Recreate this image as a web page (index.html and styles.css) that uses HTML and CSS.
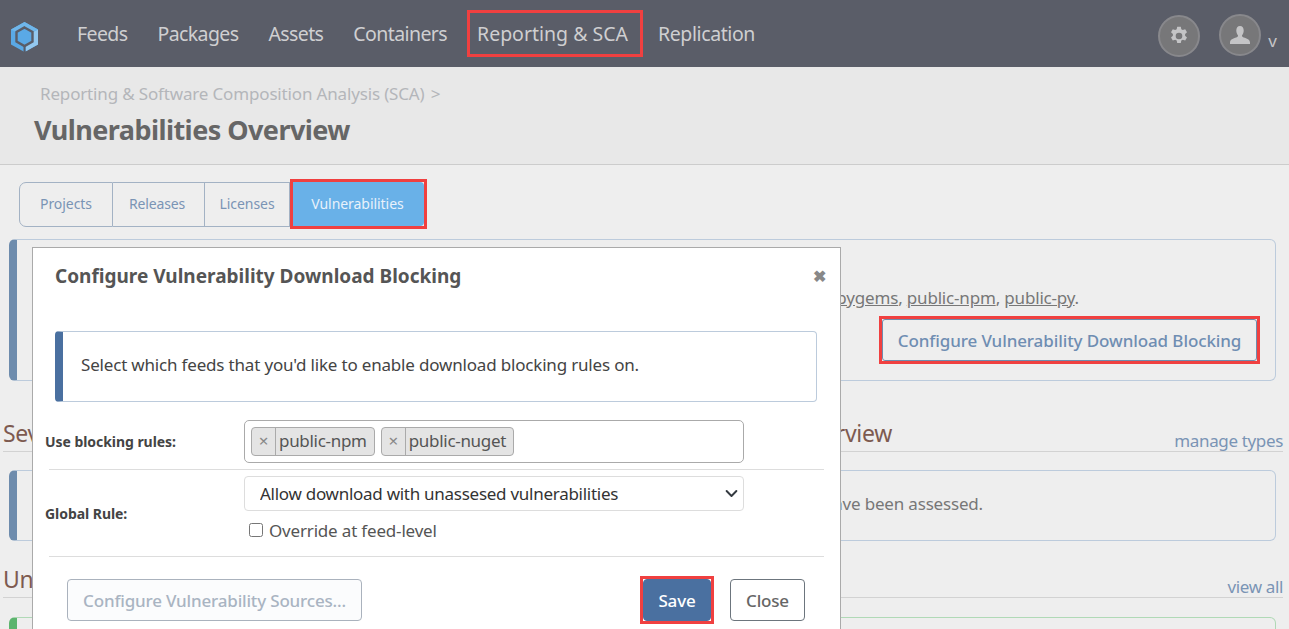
FILE: index.html
```html
<!DOCTYPE html>
<html lang="en">
<head>
  <meta charset="UTF-8">
  <meta name="viewport" content="width=device-width, initial-scale=1.0">
  <title>Vulnerabilities Overview</title>
  <link rel="stylesheet" href="styles.css">
</head>
<body>
  <div class="page">
    <header class="topbar">
      <svg class="logo" width="27" height="30" viewBox="0 0 27 30">
        <path d="M13.500 0 L27 7.500 V22.500 L13.500 30 L0 22.500 V7.500 Z" fill="#5aa9e6"/>
        <path d="M27 7.500 V22.500 L15 29.200 V24 L22 20 V10 Z" fill="#93c8ef"/>
        <path d="M13.500 0 L27 7.500 L22 10 L13.500 5 L5 10 L0 7.500 Z" fill="#6fb6ea"/>
        <path d="M13.500 5.500 L21.500 10 V19.500 L13.500 24 L5.500 19.500 V10 Z" fill="#5aa9e6" stroke="#5a5d68" stroke-width="2.400"/>
        <path d="M13.500 24 V30" stroke="#5a5d68" stroke-width="2"/>
      </svg>
      <nav class="mainnav">
        <a>Feeds</a>
        <a>Packages</a>
        <a>Assets</a>
        <a>Containers</a>
        <a class="marked">Reporting &amp; SCA</a>
        <a class="last">Replication</a>
      </nav>
      <div class="topbar-right">
        <span class="round-btn">
          <svg width="20" height="20" viewBox="0 0 20 20">
            <path fill-rule="evenodd" fill="#c4c4c6" d="M8.200 0.800 h3.600 l0.500 2.500 1.500 0.800 2.400-0.900 1.800 3.100-1.900 1.700 v1.800 l1.900 1.700-1.800 3.100-2.400-0.900-1.500 0.800-0.500 2.500 h-3.600 l-0.500-2.500-1.500-0.800-2.400 0.900-1.800-3.100 1.900-1.700 v-1.800 l-1.900-1.700 1.800-3.100 2.400 0.900 1.500-0.800 Z M10 6.700 a3.300 3.300 0 1 0 0 6.600 a3.300 3.300 0 1 0 0-6.600 Z"/>
          </svg>
        </span>
        <span class="round-btn user">
          <svg width="20" height="18" viewBox="0 0 20 18">
            <path fill="#c4c4c6" d="M10 0 c2.500 0 3.700 2 3.700 4.500 c0 2.200-0.800 3.800-1.700 4.800 c0 1.300 0.400 1.700 1.700 2.200 c3 1 6.300 1.800 6.300 5.100 v1.400 h-20 v-1.400 c0-3.300 3.300-4.100 6.300-5.100 c1.300-0.500 1.700-0.900 1.700-2.200 c-0.900-1-1.700-2.600-1.700-4.800 c0-2.500 1.200-4.500 3.700-4.500 Z"/>
          </svg>
        </span>
        <span class="caret">v</span>
      </div>
    </header>

    <section class="title-band">
      <div class="crumb">Reporting &amp; Software Composition Analysis (SCA) <span class="crumb-sep">&gt;</span></div>
      <h1>Vulnerabilities Overview</h1>
    </section>

    <main class="content">
      <div class="tabs">
        <a class="tab tab-projects">Projects</a>
        <a class="tab tab-releases">Releases</a>
        <a class="tab tab-licenses">Licenses</a>
        <div class="redbox tab-box"><a class="tab tab-active">Vulnerabilities</a></div>
      </div>

      <div class="callout callout-blocking">
        <p>Vulnerability download blocking is enabled on these feeds: <u>public-pygems</u>, <u>public-npm</u>, <u>public-py</u>.</p>
        <div class="callout-actions">
          <div class="redbox"><button class="btn-outline" type="button">Configure Vulnerability Download Blocking</button></div>
        </div>
      </div>

      <div class="section-head section-severity">
        <h3 class="split"><span>Severity</span><span>Overview</span></h3>
        <a>manage types</a>
      </div>
      <div class="callout callout-assessed">
        <p>No vulnerabilities are unassessed; all of them have been assessed.</p>
      </div>

      <div class="section-head section-unassessed">
        <h3>Unassessed</h3>
        <a>view all</a>
      </div>
      <div class="callout callout-green"></div>
    </main>

    <div class="modal">
      <div class="modal-head">
        <h2>Configure Vulnerability Download Blocking</h2>
        <span class="modal-x">&#10006;</span>
      </div>
      <div class="modal-note">Select which feeds that you'd like to enable download blocking rules on.</div>

      <div class="form-row row-tags">
        <label>Use blocking rules:</label>
        <div class="tag-input">
          <span class="tag"><i>&times;</i><b>public-npm</b></span>
          <span class="tag"><i>&times;</i><b>public-nuget</b></span>
        </div>
      </div>
      <div class="form-row row-rule">
        <label>Global Rule:</label>
        <div class="rule-field">
          <select class="rule-select">
            <option>Allow download with unassesed vulnerabilities</option>
          </select>
          <label class="check"><input type="checkbox"> Override at feed-level</label>
        </div>
      </div>
      <div class="modal-foot">
        <button class="btn-muted" type="button">Configure Vulnerability Sources...</button>
        <div class="redbox save-box"><button class="btn-save" type="button">Save</button></div>
        <button class="btn-close" type="button">Close</button>
      </div>
    </div>
  </div>
</body>
</html>
```

FILE: styles.css
```css
html, body {
  margin: 0;
  padding: 0;
  overflow: hidden;
}
body {
  font-family: "Noto Sans", "Open Sans", sans-serif;
  background-color: #eee;
  color: #666;
}
.page {
  position: relative;
  height: 629px;
  overflow: hidden;
}
.redbox {
  display: flex;
  border: 3px solid #f04040;
}

/* top bar */
.topbar {
  height: 67px;
  background-color: #5a5d68;
  display: flex;
  align-items: center;
  padding-left: 11px;
  box-sizing: border-box;
}
.logo {
  margin-top: 7px;
}
.mainnav {
  display: flex;
  gap: 30px;
  margin-left: 39px;
  font-size: 19.5px;
  letter-spacing: -0.6px;
  color: #cfcfd1;
}
.mainnav a.marked {
  letter-spacing: 0;
  border: 3px solid #f04040;
  padding: 7px 12px 7px 7px;
  margin: -10px -15px -10px -10px;
}
.mainnav a.last {
  letter-spacing: -0.4px;
}
.topbar-right {
  margin-left: auto;
  display: flex;
  align-items: center;
  gap: 19px;
  margin-top: 5px;
  padding-right: 12px;
}
.round-btn {
  width: 38px;
  height: 38px;
  border-radius: 50%;
  background-color: #777779;
  border: 2px solid #88888c;
  display: flex;
  align-items: center;
  justify-content: center;
}
.round-btn.user {
  margin-top: -2px;
}
.caret {
  margin-left: -12px;
  margin-top: 8px;
  font-size: 17px;
  color: #c4c4c6;
}

/* title */
.title-band {
  height: 98px;
  box-sizing: border-box;
  background-color: #e8e8e8;
  border-bottom: 1px solid #ccc;
  padding: 15px 0 0 34px;
}
.crumb {
  margin-left: 6px;
  font-size: 17px;
  letter-spacing: -0.16px;
  line-height: 24px;
  color: #b4b6ba;
}
.crumb-sep {
  margin-left: 2px;
}
h1 {
  margin: 6px 0 0;
  font-size: 27px;
  line-height: 36px;
  font-weight: 700;
  letter-spacing: -0.55px;
  color: #666;
}

/* tabs */
.content {
  padding-top: 17px;
}
.tabs {
  display: flex;
  margin-left: 19px;
  height: 45px;
  font-size: 14px;
  letter-spacing: -0.05px;
  line-height: 41px;
  color: #7a94b5;
}
.tab {
  box-sizing: border-box;
  text-align: center;
  border: 1px solid #a3b2c4;
  border-left-width: 0;
}
.tab-projects {
  width: 94px;
  border-left-width: 1px;
  border-radius: 7px 0 0 7px;
}
.tab-releases {
  width: 92px;
  padding-right: 3px;
  letter-spacing: -0.15px;
}
.tab-licenses { width: 85px; }
.tab-box {
  height: 50px;
  margin-top: -3px;
  box-sizing: border-box;
}
.tab-active {
  width: 131px;
  padding-right: 2px;
  line-height: 44px;
  color: #e8f2fb;
  background-color: #69b1e8;
  border: 0;
  border-radius: 0 4px 4px 0;
}

/* callouts */
.callout {
  box-sizing: border-box;
  margin: 0 13px 0 9px;
  border: 1px solid #bccbdc;
  border-left: 8px solid #6e8cad;
  border-radius: 6px;
  font-size: 17px;
  letter-spacing: -0.18px;
  color: #777;
}
.callout p {
  margin: 0;
  text-align: right;
}
.callout-blocking {
  height: 142px;
  margin-top: 12px;
  padding: 46px 196px 0 0;
}
.callout-actions {
  display: flex;
  justify-content: flex-end;
  margin: 7px -181px 0 0;
}
.btn-outline {
  width: 375px;
  height: 42px;
  padding: 0;
  font: inherit;
  font-size: 17px;
  font-weight: 500;
  letter-spacing: -0.1px;
  color: #6f8db2;
  background-color: #eee;
  border: 1px solid #6e8cad;
  border-radius: 3px;
}
.section-head {
  display: flex;
  align-items: flex-end;
  justify-content: space-between;
  margin: 0 6px 0 3px;
  border-bottom: 1px solid #d2d2d2;
}
.section-head h3 {
  margin: 0 0 2px;
  font-size: 23px;
  font-weight: 400;
  letter-spacing: -0.3px;
  line-height: 32px;
  color: #7d5a50;
}
.section-head h3.split {
  width: 889px;
  display: flex;
  justify-content: space-between;
}
.section-head a {
  font-size: 17px;
  letter-spacing: -0.35px;
  line-height: 20px;
  color: #7a94b5;
}
.section-severity {
  margin-top: 36px;
  height: 34px;
}
.callout-assessed {
  height: 71px;
  margin-top: 18px;
  padding: 21px 292px 0 0;
}
.section-unassessed {
  margin-top: 22px;
  height: 34px;
}
.callout-green {
  height: 40px;
  margin-top: 19px;
  border-color: #b0d9b6;
  border-left-color: #5cb46e;
}

/* modal */
.modal {
  position: absolute;
  left: 32px;
  top: 247px;
  width: 809px;
  height: 420px;
  box-sizing: border-box;
  background-color: #fff;
  border: 1px solid #aaa;
  color: #444;
}
.modal-head {
  display: flex;
  justify-content: space-between;
  align-items: center;
  padding: 14px 14px 0 22px;
}
.modal-head h2 {
  margin: 0;
  font-size: 19px;
  line-height: 28px;
  font-weight: 700;
  letter-spacing: 0;
  color: #555;
}
.modal-x {
  font-size: 16px;
  line-height: 28px;
  font-weight: 700;
  color: #888;
}
.modal-note {
  box-sizing: border-box;
  height: 71px;
  margin: 41px 23px 0 22px;
  padding-left: 18px;
  border: 1px solid #bccbdc;
  border-left: 8px solid #4a70a0;
  border-radius: 4px;
  font-size: 17px;
  letter-spacing: -0.18px;
  line-height: 66px;
  color: #444;
}
.form-row {
  display: flex;
  align-items: center;
  margin: 0 16px;
}
.form-row > label {
  width: 199px;
  margin-left: -4px;
  font-size: 14px;
  font-weight: 700;
  letter-spacing: -0.05px;
  color: #444;
}
.row-tags {
  margin-top: 18px;
  padding-bottom: 6px;
  border-bottom: 1px solid #ddd;
}
.tag-input {
  box-sizing: border-box;
  width: 500px;
  height: 43px;
  display: flex;
  align-items: center;
  gap: 6px;
  padding-left: 6px;
  border: 1px solid #aaa;
  border-radius: 5px;
}
.tag {
  display: flex;
  height: 29px;
  box-sizing: border-box;
  border: 1px solid #aaa;
  border-radius: 4px;
  background-color: #e4e4e4;
  font-size: 17px;
  letter-spacing: -0.3px;
  line-height: 26px;
  color: #555;
}
.tag i {
  width: 23px;
  border-right: 1px solid #aaa;
  text-align: center;
  font-style: normal;
  color: #888;
}
.tag b {
  font-weight: 400;
  padding: 0 7px 0 3px;
}
.row-rule {
  padding: 6px 0 13px;
  border-bottom: 1px solid #ddd;
}
.row-rule > label {
  margin-top: 8px;
}
.rule-field {
  width: 500px;
}
.rule-select {
  box-sizing: border-box;
  width: 100%;
  height: 35px;
  padding-left: 15px;
  font-family: inherit;
  font-size: 17px;
  letter-spacing: -0.27px;
  color: #333;
  appearance: none;
  background-color: #fff;
  background-image: url("data:image/svg+xml,%3Csvg xmlns='http://www.w3.org/2000/svg' viewBox='0 0 16 16'%3E%3Cpath fill='none' stroke='%23343a40' stroke-linecap='round' stroke-linejoin='round' stroke-width='2.4' d='M2 5l6 6 6-6'/%3E%3C/svg%3E");
  background-repeat: no-repeat;
  background-position: right 5px center;
  background-size: 13px 13px;
  border: 1px solid #ddd;
  border-radius: 4px;
}
.check {
  display: flex;
  align-items: center;
  gap: 6px;
  margin: 8px 0 0 5px;
  font-size: 17px;
  letter-spacing: -0.18px;
  line-height: 24px;
  color: #555;
}
.check input {
  width: 14px;
  height: 14px;
  margin: -3px 0 0;
}
.modal-foot {
  display: flex;
  align-items: center;
  margin-top: 19px;
  padding: 0 35px 0 34px;
}
.modal-foot button {
  height: 42px;
  box-sizing: border-box;
  font-family: inherit;
  font-size: 17px;
  font-weight: 500;
  letter-spacing: -0.18px;
  border-radius: 4px;
}
.btn-muted {
  width: 295px;
  padding: 0;
  color: #a9b4c2;
  background-color: #fbfcfd;
  border: 1px solid #aab2bd;
}
.save-box {
  margin-left: auto;
}
.btn-save {
  width: 68px;
  padding: 0;
  color: #fff;
  background-color: #4a70a0;
  border: 1px solid #4a70a0;
}
.btn-close {
  width: 75px;
  padding: 0;
  margin-left: 16px;
  color: #666;
  background-color: #fff;
  border: 1px solid #6c757d;
}
```
